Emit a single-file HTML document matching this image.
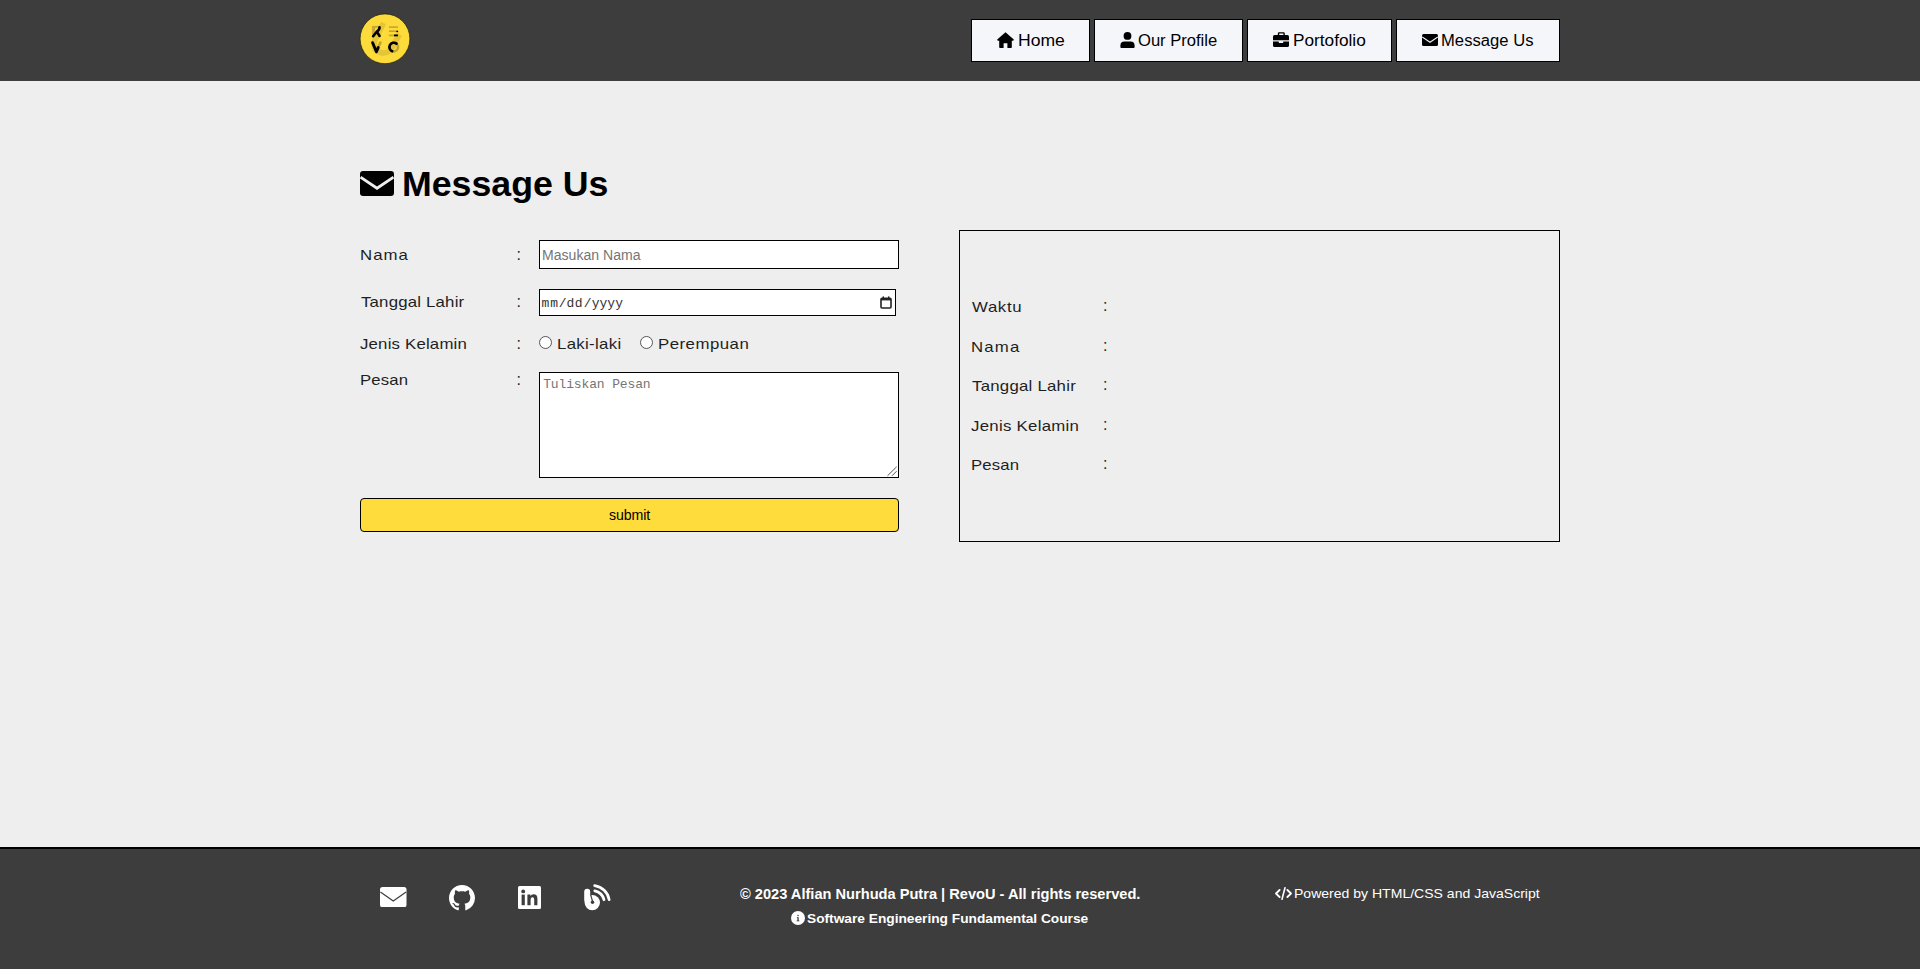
<!DOCTYPE html>
<html><head><meta charset="utf-8"><title>Message Us</title>
<style>
html,body{margin:0;padding:0}
body{width:1920px;height:969px;background:#eeeeee;position:relative;overflow:hidden;font-family:"Liberation Sans",sans-serif}
.t{position:absolute;white-space:nowrap;line-height:1}
.ic{position:absolute;display:block}
.box{position:absolute;box-sizing:border-box}
</style></head><body>
<div class="box" style="left:0;top:0;width:1920px;height:81px;background:#3d3d3d"></div>
<svg class="ic" style="left:360px;top:14px;overflow:visible" width="50" height="50" viewBox="0 0 50 50">
<circle cx="25" cy="24.8" r="24.9" fill="#fddb3a" stroke="#20200a" stroke-width="0.7"/>
<path d="M23.5 9 L14.5 27 Q12.5 36 20 38.5 Q27 40.5 31 35 L39.5 20.5" fill="none" stroke="#e6c437" stroke-width="5.5" stroke-linejoin="round"/>
<rect x="12" y="12" width="3.2" height="11" fill="#c8aa30"/>
<rect x="12.1" y="11.9" width="8.6" height="1.9" fill="#c8aa30"/><path d="M13.1 22.2 L16.8 17.6 Q19.8 15.6 19.5 13.4 M16.8 17.8 L19.6 22" fill="none" stroke="#000" stroke-width="2.6" stroke-linecap="round"/>
<rect x="28.9" y="12.3" width="9" height="1.6" fill="#c3a62f"/>
<rect x="28.9" y="16.4" width="9" height="1.6" fill="#c3a62f"/>
<rect x="28.9" y="20.6" width="9" height="1.7" fill="#c3a62f"/>
<rect x="36.4" y="16.8" width="1.7" height="1.4" fill="#000"/>
<rect x="34" y="20.5" width="3.9" height="1.8" fill="#000"/>
<path d="M20.3 28.7 L16.4 37.8" fill="none" stroke="#c3a62f" stroke-width="2.9" stroke-linecap="round"/>
<path d="M12.6 28.7 L16.4 37.8 L18.2 33.6" fill="none" stroke="#000" stroke-width="2.9" stroke-linecap="round" stroke-linejoin="round"/>
<circle cx="33.6" cy="33" r="4.4" fill="none" stroke="#c3a62f" stroke-width="2.6"/>
<path d="M36.5 29.6 A4.4 4.4 0 1 0 32.2 37.2" fill="none" stroke="#000" stroke-width="2.6" stroke-linecap="round"/>
</svg>
<div class="box" style="left:971px;top:19px;width:119px;height:43px;background:#f5f6fa;border:1px solid #000"></div>
<div class="box" style="left:1094px;top:19px;width:149px;height:43px;background:#f5f6fa;border:1px solid #000"></div>
<div class="box" style="left:1247px;top:19px;width:145px;height:43px;background:#f5f6fa;border:1px solid #000"></div>
<div class="box" style="left:1396px;top:19px;width:164px;height:43px;background:#f5f6fa;border:1px solid #000"></div>
<svg class="ic" style="left:997px;top:32px" width="17" height="16" viewBox="0 0 17 16"><path d="M8.5 0.3 L0.2 7.6 Q0 8.6 1 8.7 L2.2 8.7 L2.2 15.2 Q2.3 16 3 16 L6.6 16 L6.6 11.2 L10.4 11.2 L10.4 16 L14 16 Q14.8 16 14.8 15.2 L14.8 8.7 L16 8.7 Q17 8.6 16.8 7.6 Z" fill="#000"/></svg><svg class="ic" style="left:1120px;top:32px" width="15" height="16" viewBox="0 0 15 16"><circle cx="7.5" cy="3.9" r="3.9" fill="#000"/><path d="M4.6 9.4 L10.4 9.4 Q14.6 9.4 14.6 13.6 L14.6 15 Q14.6 16 13.6 16 L1.4 16 Q0.4 16 0.4 15 L0.4 13.6 Q0.4 9.4 4.6 9.4Z" fill="#000"/></svg><svg class="ic" style="left:1273px;top:32px" width="16" height="15" viewBox="0 0 16 15"><path d="M4.8 3 L4.8 1.4 Q4.8 0.2 6 0.2 L10.6 0.2 Q11.8 0.2 11.8 1.4 L11.8 3 L10.4 3 L10.4 1.6 L6.2 1.6 L6.2 3Z" fill="#000"/><path d="M1.6 3 L14.4 3 Q16 3 16 4.6 L16 8.3 L0 8.3 L0 4.6 Q0 3 1.6 3Z" fill="#000"/><path d="M0 9.4 L5.8 9.4 L5.8 11 L10.2 11 L10.2 9.4 L16 9.4 L16 13.4 Q16 15 14.4 15 L1.6 15 Q0 15 0 13.4Z" fill="#000"/></svg><svg class="ic" style="left:1422px;top:34px" width="16" height="12" viewBox="0 0 34 25" preserveAspectRatio="none"><rect x="0" y="0" width="34" height="25" rx="3.2" fill="#000"/><path d="M0.5 6.2 L17 17.2 L33.5 6.2" fill="none" stroke="#f5f6fa" stroke-width="2.2"/></svg>
<div class="t" style="left:1018.0px;top:32.8px;font-family:'Liberation Sans',sans-serif;font-weight:400;font-size:16px;letter-spacing:0.0px;transform:scaleX(1.0976);transform-origin:0 0;color:#000">Home</div><div class="t" style="left:1137.6px;top:32.9px;font-family:'Liberation Sans',sans-serif;font-weight:400;font-size:16px;letter-spacing:-0.02px;transform:scaleX(1.0373);transform-origin:0 0;color:#000">Our Profile</div><div class="t" style="left:1293.0px;top:32.6px;font-family:'Liberation Sans',sans-serif;font-weight:400;font-size:16px;letter-spacing:0.0px;transform:scaleX(1.0758);transform-origin:0 0;color:#000">Portofolio</div><div class="t" style="left:1441.4px;top:32.9px;font-family:'Liberation Sans',sans-serif;font-weight:400;font-size:16px;letter-spacing:0.033px;transform:scaleX(1.0375);transform-origin:0 0;color:#000">Message Us</div>
<svg class="ic" style="left:360px;top:171px" width="34" height="25" viewBox="0 0 34 25" preserveAspectRatio="none"><rect x="0" y="0" width="34" height="25" rx="3.2" fill="#000"/><path d="M0.5 6.2 L17 17.2 L33.5 6.2" fill="none" stroke="#eeeeee" stroke-width="2.8"/></svg><div class="t" style="left:402.0px;top:166.3px;font-family:'Liberation Sans',sans-serif;font-weight:700;font-size:35px;letter-spacing:0.0px;transform:scaleX(1.0201);transform-origin:0 0;color:#000">Message Us</div>
<div class="t" style="left:359.8px;top:247.3px;font-family:'Liberation Sans',sans-serif;font-weight:400;font-size:15px;letter-spacing:0.9px;transform:scaleX(1.12);transform-origin:0 0;color:#1e1e1e">Nama</div><div class="t" style="left:360.8px;top:294.2px;font-family:'Liberation Sans',sans-serif;font-weight:400;font-size:15px;letter-spacing:0.169px;transform:scaleX(1.12);transform-origin:0 0;color:#1e1e1e">Tanggal Lahir</div><div class="t" style="left:359.8px;top:336.0px;font-family:'Liberation Sans',sans-serif;font-weight:400;font-size:15px;letter-spacing:0.169px;transform:scaleX(1.12);transform-origin:0 0;color:#1e1e1e">Jenis Kelamin</div><div class="t" style="left:359.8px;top:372.3px;font-family:'Liberation Sans',sans-serif;font-weight:400;font-size:15px;letter-spacing:0.14px;transform:scaleX(1.1146);transform-origin:0 0;color:#1e1e1e">Pesan</div>
<div class="t" style="left:516.5px;top:247.0px;font-size:16px;color:#1e1e1e">:</div><div class="t" style="left:516.5px;top:293.9px;font-size:16px;color:#1e1e1e">:</div><div class="t" style="left:516.5px;top:335.7px;font-size:16px;color:#1e1e1e">:</div><div class="t" style="left:516.5px;top:372.0px;font-size:16px;color:#1e1e1e">:</div>
<div class="box" style="left:539px;top:240px;width:360px;height:29px;background:#fff;border:1px solid #000"></div>
<div class="t" style="left:542.0px;top:247.9px;font-family:'Liberation Sans',sans-serif;font-weight:400;font-size:14px;letter-spacing:0.027px;transform:scaleX(1.0031);transform-origin:0 0;color:#757575">Masukan Nama</div>
<div class="box" style="left:539px;top:289px;width:357px;height:27px;background:#fff;border:1px solid #000"></div>
<div class="t" style="left:541.5px;top:296.6px;font-family:'Liberation Mono',sans-serif;font-weight:400;font-size:13px;letter-spacing:0.9px;transform:scaleX(1.0);transform-origin:0 0;color:#333">mm</div><div class="t" style="left:558.7px;top:296.6px;font-family:'Liberation Mono',sans-serif;font-weight:400;font-size:13px;letter-spacing:0.0px;transform:scaleX(1.0);transform-origin:0 0;color:#333">/</div><div class="t" style="left:566.6px;top:296.6px;font-family:'Liberation Mono',sans-serif;font-weight:400;font-size:13px;letter-spacing:0.4px;transform:scaleX(1.0);transform-origin:0 0;color:#333">dd</div><div class="t" style="left:583.8px;top:296.6px;font-family:'Liberation Mono',sans-serif;font-weight:400;font-size:13px;letter-spacing:0.0px;transform:scaleX(1.0);transform-origin:0 0;color:#333">/</div><div class="t" style="left:591.7px;top:296.6px;font-family:'Liberation Mono',sans-serif;font-weight:400;font-size:13px;letter-spacing:0.033px;transform:scaleX(1.0);transform-origin:0 0;color:#333">yyyy</div><svg class="ic" style="left:880px;top:296px" width="12" height="13" viewBox="0 0 12 13"><rect x="1" y="2.2" width="10" height="9.8" rx="1" fill="none" stroke="#222" stroke-width="1.6"/><rect x="1" y="2" width="10" height="2.4" fill="#222"/><rect x="2.6" y="0.4" width="1.4" height="2" fill="#222"/><rect x="8" y="0.4" width="1.4" height="2" fill="#222"/></svg>
<div class="box" style="left:539px;top:336px;width:13px;height:13px;border-radius:50%;background:#fff;border:1px solid #555"></div>
<div class="box" style="left:640px;top:336px;width:13px;height:13px;border-radius:50%;background:#fff;border:1px solid #555"></div>
<div class="t" style="left:557.1px;top:336.0px;font-family:'Liberation Sans',sans-serif;font-weight:400;font-size:15px;letter-spacing:0.287px;transform:scaleX(1.12);transform-origin:0 0;color:#1e1e1e">Laki-laki</div><div class="t" style="left:658.1px;top:336.0px;font-family:'Liberation Sans',sans-serif;font-weight:400;font-size:15px;letter-spacing:0.433px;transform:scaleX(1.12);transform-origin:0 0;color:#1e1e1e">Perempuan</div>
<div class="box" style="left:539px;top:372px;width:360px;height:106px;background:#fff;border:1px solid #000"></div>
<div class="t" style="left:543.2px;top:377.9px;font-family:'Liberation Mono',sans-serif;font-weight:400;font-size:13px;letter-spacing:-0.138px;transform:scaleX(1.0);transform-origin:0 0;color:#757575">Tuliskan Pesan</div><svg class="ic" style="left:886px;top:465px" width="12" height="12" viewBox="0 0 12 12"><path d="M1.5 10.8 L10.6 1.8 M6 10.8 L10.6 6.2" stroke="#555" stroke-width="1"/></svg>
<div class="box" style="left:360px;top:498px;width:539px;height:34px;background:#fddc3c;border:1px solid #000;border-radius:4px"></div>
<div class="t" style="left:608.7px;top:507.8px;font-family:'Liberation Sans',sans-serif;font-weight:400;font-size:14px;letter-spacing:-0.1px;transform:scaleX(1.0125);transform-origin:0 0;color:#000">submit</div>
<div class="box" style="left:959px;top:230px;width:601px;height:312px;border:1px solid #000"></div>
<div class="t" style="left:972.2px;top:298.8px;font-family:'Liberation Sans',sans-serif;font-weight:400;font-size:15px;letter-spacing:0.575px;transform:scaleX(1.12);transform-origin:0 0;color:#1e1e1e">Waktu</div><div class="t" style="left:971.2px;top:339.1px;font-family:'Liberation Sans',sans-serif;font-weight:400;font-size:15px;letter-spacing:1.033px;transform:scaleX(1.12);transform-origin:0 0;color:#1e1e1e">Nama</div><div class="t" style="left:972.2px;top:377.8px;font-family:'Liberation Sans',sans-serif;font-weight:400;font-size:15px;letter-spacing:0.215px;transform:scaleX(1.12);transform-origin:0 0;color:#1e1e1e">Tanggal Lahir</div><div class="t" style="left:971.2px;top:417.9px;font-family:'Liberation Sans',sans-serif;font-weight:400;font-size:15px;letter-spacing:0.246px;transform:scaleX(1.12);transform-origin:0 0;color:#1e1e1e">Jenis Kelamin</div><div class="t" style="left:971.2px;top:457.0px;font-family:'Liberation Sans',sans-serif;font-weight:400;font-size:15px;letter-spacing:0.14px;transform:scaleX(1.1146);transform-origin:0 0;color:#1e1e1e">Pesan</div>
<div class="t" style="left:1103px;top:297.5px;font-size:16px;color:#1e1e1e">:</div><div class="t" style="left:1103px;top:337.8px;font-size:16px;color:#1e1e1e">:</div><div class="t" style="left:1103px;top:376.5px;font-size:16px;color:#1e1e1e">:</div><div class="t" style="left:1103px;top:416.6px;font-size:16px;color:#1e1e1e">:</div><div class="t" style="left:1103px;top:455.7px;font-size:16px;color:#1e1e1e">:</div>
<div class="box" style="left:0;top:847px;width:1920px;height:122px;background:#3d3d3d;border-top:2px solid #000"></div>
<svg class="ic" style="left:380px;top:887px" width="26.5" height="20.3" viewBox="0 0 34 25" preserveAspectRatio="none"><rect x="0" y="0" width="34" height="25" rx="3.2" fill="#fff"/><path d="M0.5 6.2 L17 17.2 L33.5 6.2" fill="none" stroke="#3d3d3d" stroke-width="1.6"/></svg><svg class="ic" style="left:449px;top:884.5px" width="26" height="26" viewBox="0 0 16 16"><path fill="#fff" d="M8 0C3.58 0 0 3.58 0 8c0 3.54 2.29 6.53 5.47 7.59.4.07.55-.17.55-.38 0-.19-.01-.82-.01-1.49-2.01.37-2.53-.49-2.69-.94-.09-.23-.48-.94-.82-1.13-.28-.15-.68-.52-.01-.53.63-.01 1.08.58 1.23.82.72 1.21 1.87.87 2.33.66.07-.52.28-.87.51-1.07-1.78-.2-3.64-.89-3.640-3.95 0-.87.31-1.590.82-2.15-.08-.2-.36-1.02.08-2.12 0 0 .67-.21 2.2.82.64-.18 1.32-.27 2-.27.68 0 1.36.09 2 .27 1.53-1.04 2.2-.82 2.2-.82.44 1.1.16 1.92.08 2.12.51.56.82 1.27.82 2.15 0 3.07-1.87 3.75-3.65 3.95.29.25.54.73.54 1.48 0 1.07-.01 1.93-.01 2.2 0 .21.15.46.55.38A8.013 8.013 0 0016 8c0-4.42-3.58-8-8-8z"/></svg><svg class="ic" style="left:518px;top:886px" width="23" height="23" viewBox="0 0 23 23"><rect x="0" y="0" width="23" height="23" rx="1.5" fill="#fff"/><rect x="3.6" y="8.6" width="3.2" height="10.6" fill="#3d3d3d"/><circle cx="5.2" cy="5.4" r="1.9" fill="#3d3d3d"/><path d="M9.4 8.6 L12.4 8.6 L12.4 10 Q13.4 8.3 15.6 8.3 Q19.4 8.3 19.4 12.6 L19.4 19.2 L16.2 19.2 L16.2 13.4 Q16.2 11.2 14.6 11.2 Q12.6 11.2 12.6 13.6 L12.6 19.2 L9.4 19.2Z" fill="#3d3d3d"/></svg><svg class="ic" style="left:584px;top:883px" width="28" height="28" viewBox="0 0 28 28">
<rect x="0.2" y="5.8" width="6" height="14" rx="3" fill="#fff"/>
<circle cx="8.3" cy="19.6" r="7.7" fill="#fff"/>
<path d="M6.2 12 L7.3 12 L9.2 18.2 L8 19 Z" fill="#3d3d3d"/>
<circle cx="8.5" cy="19.3" r="1.75" fill="#3d3d3d"/>
<path d="M10.8 7.8 A12.1 12.1 0 0 1 20.0 16.7" fill="none" stroke="#fff" stroke-width="2.8" stroke-linecap="round"/>
<path d="M10.68 2.67 A17.1 17.1 0 0 1 25.14 16.63" fill="none" stroke="#fff" stroke-width="2.8" stroke-linecap="round"/>
</svg>
<div class="t" style="left:740.3px;top:887.0px;font-family:'Liberation Sans',sans-serif;font-weight:700;font-size:14.5px;letter-spacing:0.002px;transform:scaleX(1.0078);transform-origin:0 0;color:#fff">© 2023 Alfian Nurhuda Putra | RevoU - All rights reserved.</div><svg class="ic" style="left:791px;top:911px" width="14" height="14" viewBox="0 0 14 14"><circle cx="7" cy="7" r="7" fill="#fff"/><circle cx="7" cy="4.4" r="0.75" fill="#3d3d3d"/><rect x="6.4" y="6.3" width="1.3" height="3.6" fill="#3d3d3d"/><rect x="5.9" y="6.3" width="1.2" height="0.7" fill="#3d3d3d"/><rect x="5.7" y="9.4" width="2.6" height="0.9" fill="#3d3d3d"/></svg><div class="t" style="left:807.3px;top:912.0px;font-family:'Liberation Sans',sans-serif;font-weight:700;font-size:13.5px;letter-spacing:-0.008px;transform:scaleX(1.0171);transform-origin:0 0;color:#fff">Software Engineering Fundamental Course</div><svg class="ic" style="left:1275px;top:887px" width="17" height="13" viewBox="0 0 17 13"><path d="M4.6 3 L1 6.5 L4.6 10" fill="none" stroke="#fff" stroke-width="1.8" stroke-linecap="round" stroke-linejoin="round"/><path d="M12.4 3 L16 6.5 L12.4 10" fill="none" stroke="#fff" stroke-width="1.8" stroke-linecap="round" stroke-linejoin="round"/><path d="M10 0.8 L7 12.2" fill="none" stroke="#fff" stroke-width="1.6" stroke-linecap="round"/></svg><div class="t" style="left:1294.0px;top:886.8px;font-family:'Liberation Sans',sans-serif;font-weight:400;font-size:13px;letter-spacing:0.0px;transform:scaleX(1.0793);transform-origin:0 0;color:#fff">Powered by HTML/CSS and JavaScript</div>
</body></html>
